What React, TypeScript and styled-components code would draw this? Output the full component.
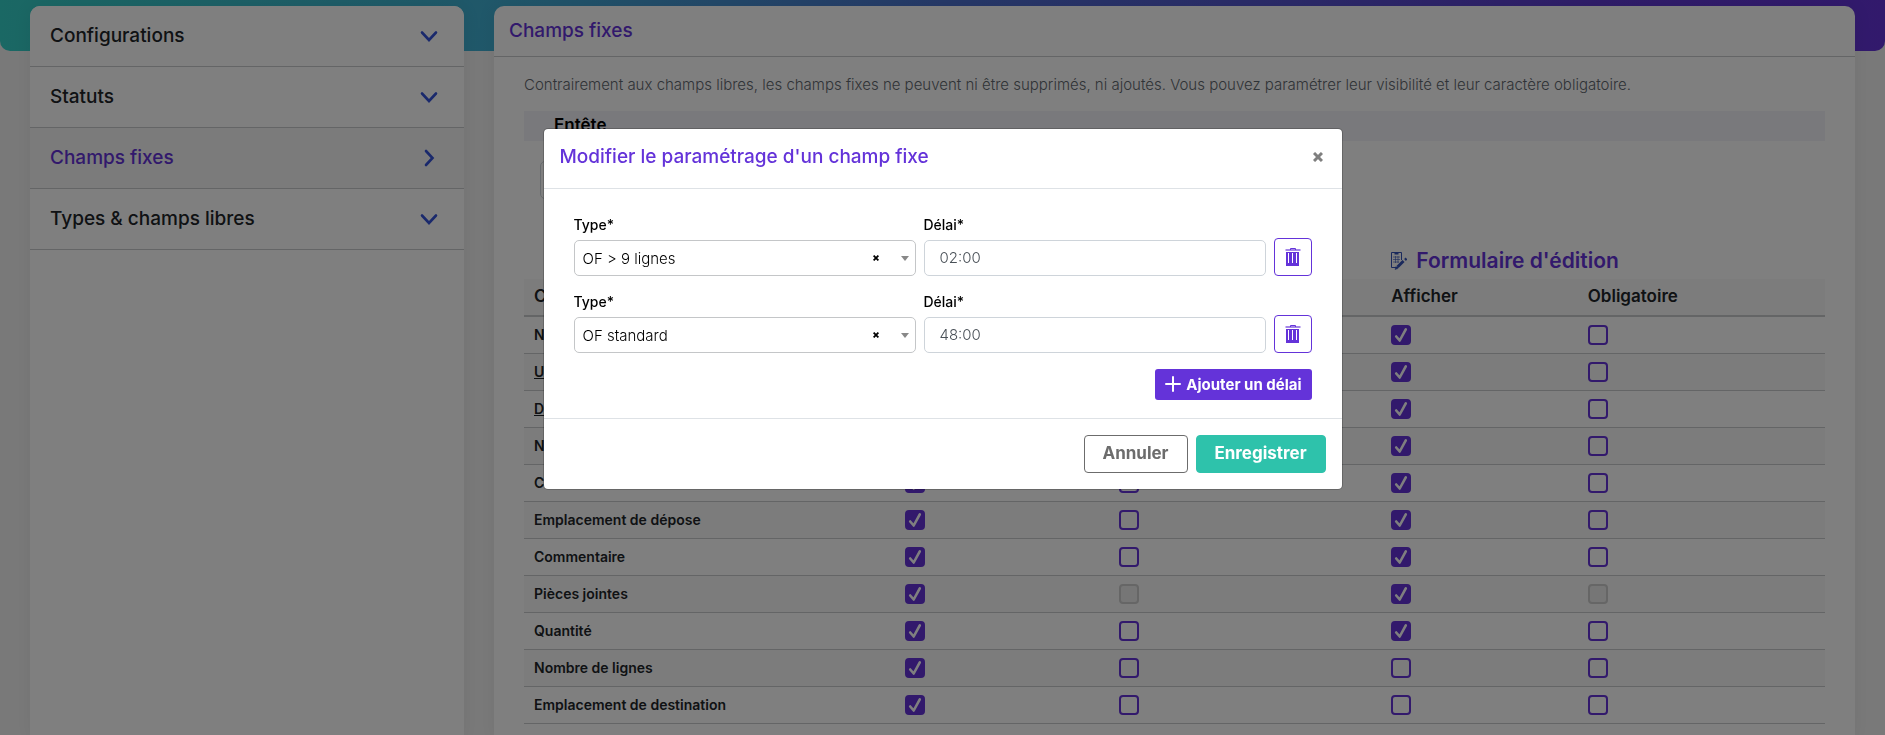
import React from "react";
import styled, { createGlobalStyle, css } from "styled-components";

const purple = "#6433d9";
const line = "#c8cacc";

const GlobalStyle = createGlobalStyle`
  *, *::before, *::after { box-sizing: border-box; }
  body {
    margin: 0;
    background: #f3f3f3;
    color: #212529;
    font-family: Inter, "Open Sans", sans-serif;
    font-size: 14px;
    line-height: 20px;
    overflow: hidden;
  }
  button, input, select { font-family: inherit; }
`;

const Page = styled.div`
  min-height: 100vh;
`;

const Banner = styled.div`
  height: 51px;
  border-radius: 0 0 10px 10px;
  background: linear-gradient(to right, #35d0c8 0%, #41aed4 27%, #4c72d0 50%, #5f3ad2 85%, #6433d9 100%);
`;

const Columns = styled.div`
  display: grid;
  grid-template-columns: 434fr 1361fr;
  gap: 30px;
  height: 100vh;
  margin-top: -45px;
  padding: 0 30px;
`;

const Card = styled.section`
  background: #fff;
  border-radius: 10px 10px 0 0;
  box-shadow: 0 0 20px rgba(0, 0, 0, 0.06);
  overflow: hidden;
`;

const MenuLink = styled.a<{ $active?: boolean }>`
  display: flex;
  align-items: center;
  justify-content: space-between;
  height: 61px;
  padding: 0 26px 0 20px;
  border-bottom: 1px solid ${line};
  background: ${(p) => (p.$active ? "#f6f6f6" : "#fff")};
  color: ${(p) => (p.$active ? purple : "#212529")};
  font-size: 19px;
  font-weight: 500;
  text-decoration: none;
`;

const CardHeader = styled.header`
  height: 51px;
  padding: 14px 15px;
  border-bottom: 1px solid ${line};
`;

const Title = styled.h2`
  margin: 0;
  color: ${purple};
  font-size: 19px;
  font-weight: 500;
  line-height: 22px;
`;

const CardBody = styled.div`
  padding: 18px 30px;
`;

const Intro = styled.p`
  margin: 0 0 16px;
  color: #5f676e;
  font-size: 15px;
  font-weight: 300;
`;

const SectionBar = styled.h3`
  height: 30px;
  margin: 0 0 20px;
  padding: 0 30px;
  background: #f3f3f8;
  color: #000;
  font-size: 17px;
  font-weight: 600;
  line-height: 28px;
`;

const HeaderField = styled.input`
  display: block;
  width: 240px;
  height: 38px;
  margin: 0 0 40px 16px;
  border: 1px solid #ced4da;
  border-radius: 5px;
`;

const Table = styled.table`
  width: 100%;
  table-layout: fixed;
  border-collapse: collapse;
  text-align: left;
`;

const GroupCell = styled.th`
  height: 40px;
  padding: 4px 10px 0;
  color: ${purple};
  font-size: 21px;
  font-weight: 600;
`;

const GroupTitle = styled.span`
  display: flex;
  align-items: center;
  gap: 9px;
`;

const HeadCell = styled.th`
  height: 37px;
  padding: 0 10px 2px;
  border-bottom: 2px solid ${line};
  background: #f9f9f9;
  font-size: 17px;
  font-weight: 600;
`;

const Row = styled.tr`
  height: 37px;
  border-bottom: 1px solid ${line};
  &:nth-child(even) { background: #f9f9f9; }
`;

const NameCell = styled.th<{ $underlined?: boolean }>`
  padding: 0 10px;
  font-size: 14px;
  font-weight: 600;
  ${(p) => p.$underlined && css`text-decoration: underline;`}
`;

const Cell = styled.td`
  padding: 0 10px;
`;

const CheckWrap = styled.span`
  display: grid;
  width: 20px;
  height: 20px;
  > * { grid-area: 1 / 1; }
  svg { pointer-events: none; }
`;

const CheckInput = styled.input`
  appearance: none;
  width: 20px;
  height: 20px;
  margin: 0;
  border: 2px solid ${purple};
  border-radius: 4px;
  &:checked { background: ${purple}; }
  &:disabled { border-color: #ccc; background: #ececec; }
`;

const Overlay = styled.div`
  position: fixed;
  inset: 0;
  display: flex;
  align-items: flex-start;
  justify-content: center;
  padding: 128px 20px 20px;
  background: rgba(0, 0, 0, 0.5);
`;

const Dialog = styled.div`
  width: 100%;
  max-width: 800px;
  border: 1px solid rgba(0, 0, 0, 0.2);
  border-radius: 5px;
  background: #fff;
  background-clip: padding-box;
`;

const DialogHeader = styled.header`
  display: flex;
  align-items: center;
  justify-content: space-between;
  height: 60px;
  padding: 0 19px 3px 16px;
  border-bottom: 1px solid #dee2e6;
`;

const CloseButton = styled.button`
  display: grid;
  padding: 0;
  border: 0;
  background: none;
  color: #7f7f7f;
`;

const DialogBody = styled.div`
  display: flex;
  flex-direction: column;
  padding: 26px 30px 18px;
`;

const DelayRow = styled.div`
  display: grid;
  grid-template-columns: 1fr 1fr 38px;
  gap: 8px;
  align-items: end;
  margin-bottom: 16px;
`;

const Field = styled.div`
  display: flex;
  flex-direction: column;
  gap: 5px;
`;

const Label = styled.label`
  color: #000;
  font-size: 14px;
  font-weight: 500;
`;

const control = css`
  width: 100%;
  height: 36px;
  border-radius: 5px;
  background: #fff;
  font-size: 15px;
  font-weight: 300;
`;

const SelectWrap = styled.div`
  position: relative;
`;

const Select = styled.select`
  ${control}
  appearance: none;
  display: block;
  padding: 0 60px 0 8px;
  border: 1px solid #c4c6c8;
  color: #000;
`;

const SelectTools = styled.div`
  position: absolute;
  inset: 0 7px 0 auto;
  display: flex;
  align-items: center;
  gap: 22px;
  pointer-events: none;
`;

const ClearButton = styled.button`
  display: grid;
  padding: 0;
  border: 0;
  background: none;
  color: #000;
  pointer-events: auto;
`;

const TextInput = styled.input`
  ${control}
  padding: 0 15px 2px;
  border: 1px solid #ced4da;
  color: #495057;
`;

const DeleteButton = styled.button`
  display: grid;
  place-items: center;
  width: 38px;
  height: 38px;
  padding: 0;
  border: 1px solid ${purple};
  border-radius: 4px;
  background: #fff;
  color: ${purple};
`;

const AddButton = styled.button`
  display: flex;
  align-items: center;
  align-self: flex-end;
  justify-content: center;
  gap: 5px;
  height: 31px;
  padding: 0 10px 1px;
  border: 0;
  border-radius: 3px;
  background: ${purple};
  color: #fff;
  font-size: 15px;
  font-weight: 700;
`;

const DialogFooter = styled.footer`
  display: flex;
  justify-content: flex-end;
  gap: 8px;
  padding: 16px;
  border-top: 1px solid #dee2e6;
`;

const FooterButton = styled.button<{ $primary?: boolean }>`
  height: 38px;
  min-width: ${(p) => (p.$primary ? 130 : 104)}px;
  padding: 0 16px 2px;
  border: 1px solid ${(p) => (p.$primary ? "#2ec2ab" : "#6c6c6c")};
  border-radius: 4px;
  background: ${(p) => (p.$primary ? "#2ec2ab" : "#fff")};
  color: ${(p) => (p.$primary ? "#fff" : "#6c6c6c")};
  font-size: 17px;
  font-weight: 700;
`;

const Chevron = ({ right }: { right?: boolean }) => (
  <svg width="18" height="18" viewBox="0 0 18 18" fill="none" stroke="#3553d8" strokeWidth="2.6" strokeLinecap="round">
    <path d={right ? "M6 2 L12.5 9 L6 16" : "M2 5.5 L9 13 L16 5.5"} />
  </svg>
);

const Cross = ({ size }: { size: number }) => (
  <svg width={size} height={size} viewBox="0 0 10 10" stroke="currentColor" strokeWidth="3">
    <path d="M1 1 L9 9 M9 1 L1 9" />
  </svg>
);

const Trash = () => (
  <svg width="16" height="18" viewBox="0 0 16 18">
    <rect x="0.5" y="1" width="15" height="2" fill="#a385e8" />
    <path d="M5.5 2 V0.5 H10.5 V2" fill="none" stroke="currentColor" />
    <rect x="1" y="4" width="13" height="14" fill="currentColor" />
    <path d="M3.5 5 V15 M7.5 5 V15 M11.5 5 V15" stroke="#fff" strokeWidth="1" />
  </svg>
);

const EditForm = () => (
  <svg width="16" height="18" viewBox="0 0 16 18" fill="none" stroke="#3553b8">
    <path d="M7 15.5 H0.5 V0.5 H10.5 V8" />
    <path d="M3.5 1.5 H7.5" strokeWidth="2" />
    <path d="M2 5 H9 M2 7.5 H9 M2 10 H8 M4.5 4 V11 M7 4 V11" strokeOpacity="0.6" />
    <path d="M6.5 15 L12.5 9" strokeWidth="3" />
    <path d="M14 8 L15.5 6.5" strokeWidth="2.5" />
    <path d="M4 17.5 L5 14.5 L7 16.5 Z" fill="#3553b8" strokeWidth="0.5" />
  </svg>
);

type Box = "on" | "off" | "locked";

const Check = ({ state, label }: { state: Box; label: string }) => (
  <CheckWrap>
    <CheckInput type="checkbox" aria-label={label} defaultChecked={state === "on"} disabled={state === "locked"} />
    {state === "on" && (
      <svg width="20" height="20" viewBox="0 0 20 20" fill="none" stroke="#fff" strokeWidth="2.6" strokeLinecap="round" strokeLinejoin="round">
        <path d="M5.2 11.5 L8.7 15.5 L14.8 4.3" />
      </svg>
    )}
  </CheckWrap>
);

const columns = ["Afficher", "Obligatoire", "Afficher", "Obligatoire"];

const rows: { name: string; underlined?: boolean; boxes: Box[] }[] = [
  { name: "Numéro", boxes: ["on", "off", "on", "off"] },
  { name: "Urgence", underlined: true, boxes: ["on", "off", "on", "off"] },
  { name: "Date attendue", underlined: true, boxes: ["on", "off", "on", "off"] },
  { name: "Numéro de projet", boxes: ["on", "off", "on", "off"] },
  { name: "Code", boxes: ["on", "off", "on", "off"] },
  { name: "Emplacement de dépose", boxes: ["on", "off", "on", "off"] },
  { name: "Commentaire", boxes: ["on", "off", "on", "off"] },
  { name: "Pièces jointes", boxes: ["on", "locked", "on", "locked"] },
  { name: "Quantité", boxes: ["on", "off", "on", "off"] },
  { name: "Nombre de lignes", boxes: ["on", "off", "off", "off"] },
  { name: "Emplacement de destination", boxes: ["on", "off", "off", "off"] },
];

const menu = ["Configurations", "Statuts", "Champs fixes", "Types & champs libres"];

const delays = [
  { type: "OF > 9 lignes", delay: "02:00" },
  { type: "OF standard", delay: "48:00" },
];

const NameCol = styled.col`
  width: 28.5%;
`;

const ShowCol = styled.col<{ $share: number }>`
  width: ${(p) => p.$share}%;
`;

export default function App() {
  return (
    <Page>
      <GlobalStyle />
      <Banner />
      <Columns>
        <Card as="nav">
          {menu.map((item) => (
            <MenuLink key={item} href="#" $active={item === "Champs fixes"}>
              {item}
              <Chevron right={item === "Champs fixes"} />
            </MenuLink>
          ))}
        </Card>
        <Card>
          <CardHeader>
            <Title>Champs fixes</Title>
          </CardHeader>
          <CardBody>
            <Intro>
              Contrairement aux champs libres, les champs fixes ne peuvent ni être supprimés, ni ajoutés. Vous pouvez
              paramétrer leur visibilité et leur caractère obligatoire.
            </Intro>
            <SectionBar>Entête</SectionBar>
            <HeaderField aria-label="Entête" />
            <Table>
              <colgroup>
                <NameCol />
                <ShowCol $share={16.5} />
                <ShowCol $share={20.9} />
                <ShowCol $share={15.1} />
                <col />
              </colgroup>
              <thead>
                <tr>
                  <GroupCell colSpan={3} />
                  <GroupCell colSpan={2}>
                    <GroupTitle>
                      <EditForm />
                      Formulaire d'édition
                    </GroupTitle>
                  </GroupCell>
                </tr>
                <tr>
                  <HeadCell>Champ fixe</HeadCell>
                  {columns.map((c, i) => (
                    <HeadCell key={i}>{c}</HeadCell>
                  ))}
                </tr>
              </thead>
              <tbody>
                {rows.map((row) => (
                  <Row key={row.name}>
                    <NameCell $underlined={row.underlined}>{row.name}</NameCell>
                    {row.boxes.map((state, i) => (
                      <Cell key={i}>
                        <Check state={state} label={`${row.name} – ${columns[i]}`} />
                      </Cell>
                    ))}
                  </Row>
                ))}
              </tbody>
            </Table>
          </CardBody>
        </Card>
      </Columns>

      <Overlay>
        <Dialog role="dialog" aria-modal="true" aria-labelledby="dialog-title">
          <DialogHeader>
            <Title id="dialog-title">Modifier le paramétrage d'un champ fixe</Title>
            <CloseButton aria-label="Fermer">
              <Cross size={10} />
            </CloseButton>
          </DialogHeader>
          <DialogBody>
            {delays.map((d, i) => (
              <DelayRow key={d.type}>
                <Field>
                  <Label htmlFor={`type-${i}`}>Type*</Label>
                  <SelectWrap>
                    <Select id={`type-${i}`} defaultValue={d.type}>
                      {delays.map((o) => (
                        <option key={o.type}>{o.type}</option>
                      ))}
                    </Select>
                    <SelectTools>
                      <ClearButton aria-label="Effacer">
                        <Cross size={6} />
                      </ClearButton>
                      <svg width="8" height="5" viewBox="0 0 8 5" fill="#888">
                        <path d="M0 0 H8 L4 5 Z" />
                      </svg>
                    </SelectTools>
                  </SelectWrap>
                </Field>
                <Field>
                  <Label htmlFor={`delay-${i}`}>Délai*</Label>
                  <TextInput id={`delay-${i}`} defaultValue={d.delay} />
                </Field>
                <DeleteButton aria-label="Supprimer">
                  <Trash />
                </DeleteButton>
              </DelayRow>
            ))}
            <AddButton>
              <svg width="16" height="16" viewBox="0 0 16 16" stroke="#fff" strokeWidth="2" strokeLinecap="round">
                <path d="M8 1 V15 M1 8 H15" />
              </svg>
              Ajouter un délai
            </AddButton>
          </DialogBody>
          <DialogFooter>
            <FooterButton>Annuler</FooterButton>
            <FooterButton $primary>Enregistrer</FooterButton>
          </DialogFooter>
        </Dialog>
      </Overlay>
    </Page>
  );
}
